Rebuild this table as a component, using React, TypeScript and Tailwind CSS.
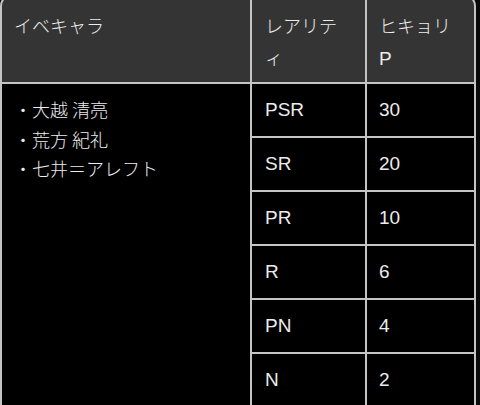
const rows = [
  { rarity: "PSR", distance: "30" },
  { rarity: "SR", distance: "20" },
  { rarity: "PR", distance: "10" },
  { rarity: "R", distance: "6" },
  { rarity: "PN", distance: "4" },
  { rarity: "N", distance: "2" },
];

const charas = ["大越 清亮", "荒方 紀礼", "七井＝アレフト"];

const latin = { fontFamily: '"Liberation Sans", "Noto Sans CJK JP", sans-serif' };

export default function App() {
  return (
    <div
      className="h-[405px] w-[480px] overflow-hidden bg-[#0a0a0a] text-[18px] font-light leading-[30px] text-[#ececec]"
      style={{ fontFamily: '"Noto Sans CJK JP", sans-serif' }}
    >
      <div className="mt-[-6px] w-[476px] rounded-t-[12px] bg-[#c4c4c4] p-[2px]">
        <div className="grid grid-cols-[248px_113px_107px] grid-rows-[86px_repeat(6,52px)] gap-[2px] overflow-hidden rounded-t-[10px]">
          <div className="bg-[#343434] px-3 pb-[10px] pt-[13px] leading-[32px]">イベキャラ</div>
          <div className="bg-[#343434] pb-[10px] pl-[13px] pr-3 pt-[13px] leading-[32px]">レアリティ</div>
          <div className="bg-[#343434] px-3 pb-[10px] pt-[13px] leading-[32px]">
            ヒキョリ<span className="text-[19px] font-normal" style={latin}>P</span>
          </div>

          <div className="row-span-6 bg-black px-3 py-[11px] leading-[29.5px]">
            {charas.map((name) => (
              <p key={name}>・{name}</p>
            ))}
          </div>
          {rows.map((row) => (
            <div key={row.rarity} className="contents">
              <div className="bg-black py-[11px] pl-[13px] pr-3 text-[19px] font-normal" style={latin}>
                {row.rarity}
              </div>
              <div className="bg-black px-3 py-[11px] text-[19px] font-normal" style={latin}>
                {row.distance}
              </div>
            </div>
          ))}
        </div>
      </div>
    </div>
  );
}
